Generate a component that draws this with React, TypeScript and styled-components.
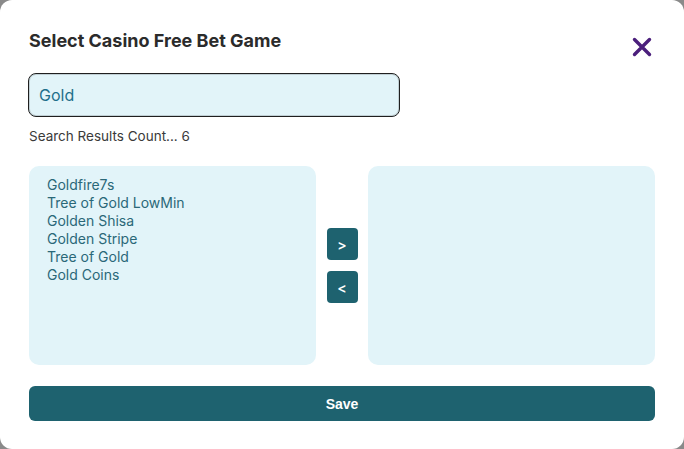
import React, { useState } from "react";
import styled, { createGlobalStyle } from "styled-components";

const GlobalStyle = createGlobalStyle`
  html, body {
    margin: 0;
    padding: 0;
    background: #8a8a8a;
    font-family: "Inter", "Liberation Sans", sans-serif;
  }
`;

const Modal = styled.div`
  box-sizing: border-box;
  width: 684px;
  height: 449px;
  background: #ffffff;
  border-radius: 12px;
  padding: 28px 29px 27px 29px;
  display: flex;
  flex-direction: column;

  & > * {
    flex-shrink: 0;
  }
`;

const Header = styled.div`
  display: flex;
  align-items: flex-start;
  justify-content: space-between;
`;

const Title = styled.h2`
  margin: 0;
  font-size: 18px;
  line-height: 26px;
  font-weight: 700;
  color: #2b2b2b;
`;

const CloseButton = styled.button`
  border: none;
  background: none;
  padding: 0;
  margin: 8px 2px 0 0;
  width: 22px;
  height: 22px;
  display: flex;
  align-items: center;
  justify-content: center;
  cursor: pointer;
`;

const SearchInput = styled.input`
  box-sizing: border-box;
  margin-top: 15px;
  width: 372px;
  height: 44px;
  margin-left: -1px;
  padding: 0 10px;
  border: 1px solid #1f1f1f;
  border-radius: 8px;
  background: #e2f4f9;
  box-shadow: inset 0 0 0 1px rgba(0, 0, 0, 0.15);
  font-family: inherit;
  font-size: 16px;
  color: #1f6f8b;
  caret-color: #1f6f8b;
  outline: none;
`;

const Count = styled.div`
  margin-top: 10px;
  font-size: 13.5px;
  color: #3a3a3a;
  line-height: 18px;
`;

const Lists = styled.div`
  margin-top: 21px;
  display: grid;
  grid-template-columns: 287px 1fr 287px;
  height: 199px;
`;

const ListBox = styled.div`
  background: #e2f4f9;
  border-radius: 10px;
  padding: 10px 18px;
  display: flex;
  flex-direction: column;
`;

const Item = styled.div`
  font-size: 14px;
  line-height: 18px;
  color: #2a6878;
`;

const Arrows = styled.div`
  display: flex;
  flex-direction: column;
  align-items: center;
  padding-top: 62px;
  gap: 11px;
`;

const ArrowButton = styled.button`
  width: 31px;
  height: 32px;
  border: none;
  border-radius: 4px;
  background: #1e626f;
  color: #ffffff;
  font-family: "Inter", sans-serif;
  font-size: 14px;
  font-weight: 600;
  padding: 0;
  cursor: pointer;
`;

const SaveButton = styled.button`
  margin-top: 21px;
  height: 35px;
  border: none;
  border-radius: 6px;
  background: #1e626f;
  color: #ffffff;
  font-family: "Liberation Sans", Arial, sans-serif;
  font-size: 14px;
  font-weight: 700;
  cursor: pointer;
`;

const games = [
  "Goldfire7s",
  "Tree of Gold LowMin",
  "Golden Shisa",
  "Golden Stripe",
  "Tree of Gold",
  "Gold Coins",
];

export default function App() {
  const [query, setQuery] = useState("Gold");
  return (
    <>
      <GlobalStyle />
      <Modal>
        <Header>
          <Title>Select Casino Free Bet Game</Title>
          <CloseButton aria-label="Close">
            <svg width="20" height="20" viewBox="0 0 20 20">
              <path
                d="M2.5 2.5 L17.5 17.5 M17.5 2.5 L2.5 17.5"
                stroke="#4b1f7c"
                strokeWidth="3.4"
                strokeLinecap="round"
              />
            </svg>
          </CloseButton>
        </Header>
        <SearchInput
          value={query}
          autoFocus
          onChange={(e) => setQuery(e.target.value)}
        />
        <Count>Search Results Count... {games.length}</Count>
        <Lists>
          <ListBox>
            {games.map((g) => (
              <Item key={g}>{g}</Item>
            ))}
          </ListBox>
          <Arrows>
            <ArrowButton>&gt;</ArrowButton>
            <ArrowButton>&lt;</ArrowButton>
          </Arrows>
          <ListBox />
        </Lists>
        <SaveButton>Save</SaveButton>
      </Modal>
    </>
  );
}
